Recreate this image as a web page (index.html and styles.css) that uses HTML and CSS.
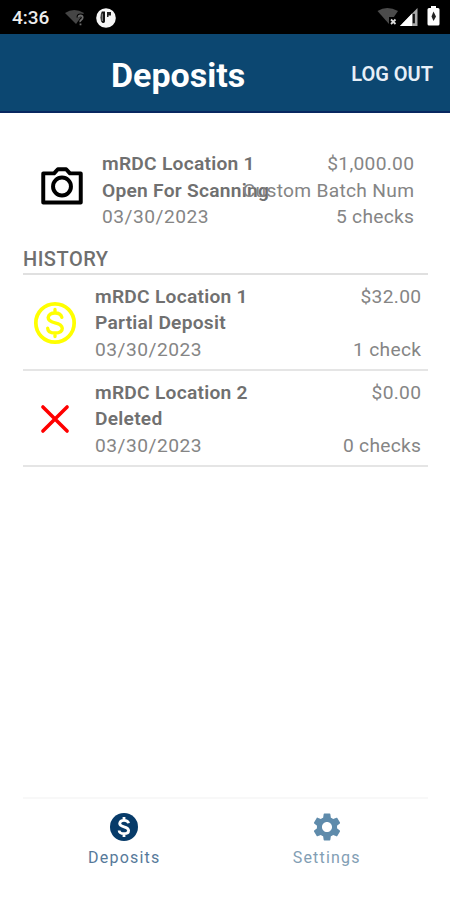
FILE: index.html
```
<!DOCTYPE html>
<html lang="en">
<head>
<meta charset="utf-8">
<title>Deposits</title>
<link rel="stylesheet" href="styles.css">
</head>
<body>
<div class="status">
  <span class="clock">4:36</span>
  <svg class="wifi-left" width="22" height="18" viewBox="0 0 22 18"><path d="M1 4Q10-2 20 4L12 15Z" fill="#454545"/><path d="M14 8.5Q14 6 16.5 6T19 8.5Q19 10 17.5 11T16.5 13" fill="none" stroke="#000" stroke-width="3"/><path d="M14.5 8.5Q14.5 6.5 16.5 6.5T18.7 8.5Q18.7 10 17.2 11T16.5 13M16.5 14.5V16.3" fill="none" stroke="#6c6c6c" stroke-width="1.8"/></svg>
  <svg class="app" width="20" height="20" viewBox="0 0 20 20"><circle cx="10" cy="10" r="9.8" fill="#f6f6f6"/><path d="M9 3.6H5.8Q4.5 6 4.5 9.5T6 14.5Q8.2 16 9 13.5Z" fill="#111"/><path d="M11 4h4v3.500h-2.500V9H11z" fill="#222"/><path d="M6.2 5.5V13" stroke="#aaa"/></svg>
  <svg class="wifi-right" width="22" height="20" viewBox="0 0 22 20"><path d="M.5 4Q10-2 21 4L12 17Z" fill="#4b4b4b"/><path d="M12 10h9v9h-9z" fill="#000"/><path d="M14 12.5l4.5 4.5m0-4.5L14 17" stroke="#ddd" stroke-width="1.8"/></svg>
  <svg class="signal" width="18" height="18" viewBox="0 0 18 18"><path d="M17.5 0V18H0Z" fill="#aaa"/><path d="M12 5.5V18H0Z" fill="#fff"/><path d="M12.7 5.8h2.2v9.5h-2.2z" fill="#111"/></svg>
  <svg class="battery" width="13" height="20" viewBox="0 0 13 20"><path d="M4 0h5v2h2q1.500 0 1.500 1.500V18q0 1.500-1.500 1.500H2Q.5 19.500.5 18V3.500Q.5 2 2 2h2z" fill="#fff"/><path d="M6.500 5.500L9 10.500 6.500 15 4.500 10.500Z" fill="#222"/></svg>
</div>
<header class="header">
  <h1 class="title">Deposits</h1>
  <span class="logout">LOG OUT</span>
</header>
<main class="content">
  <section class="row current">
    <svg class="icon" viewBox="0 0 24 24"><path d="M3 6.900h5.200L10 4.900h4l1.800 2H21V20.900H3Z" fill="none" stroke="#000" stroke-width="1.900" stroke-linejoin="round"/><circle cx="12" cy="13.200" r="4.300" fill="none" stroke="#000" stroke-width="1.900"/></svg>
    <div class="info"><b>mRDC Location 1</b><b>Open For Scanning</b><span>03/30/2023</span></div>
    <div class="amounts"><span>$1,000.00</span><span>Custom Batch Num</span><span>5 checks</span></div>
  </section>
  <h2 class="history">HISTORY</h2>
  <section class="row">
    <svg class="icon" viewBox="0 0 24 24" fill="none" stroke="#ff0" stroke-width="1.600" stroke-linecap="round"><circle cx="12" cy="12" r="9.200" stroke-width="1.800"/><path d="M15.300 9.300Q14.800 7.200 12 7.200T8.700 9.400Q8.700 11.200 12 11.900T15.500 14.500Q15.500 16.800 12 16.800T8.500 14.500M12 5.500V7.200M12 16.800V18.500"/></svg>
    <div class="info"><b>mRDC Location 1</b><b>Partial Deposit</b><span>03/30/2023</span></div>
    <div class="amounts"><span>$32.00</span><span></span><span>1 check</span></div>
  </section>
  <section class="row">
    <svg class="icon" viewBox="0 0 24 24"><path d="M6.200 6.200L17.800 17.800M17.800 6.200L6.200 17.800" fill="none" stroke="#f00" stroke-width="1.700" stroke-linecap="round"/></svg>
    <div class="info"><b>mRDC Location 2</b><b>Deleted</b><span>03/30/2023</span></div>
    <div class="amounts"><span>$0.00</span><span></span><span>0 checks</span></div>
  </section>
</main>
<nav class="tabs">
  <div class="tab active">
    <svg class="tab-icon" viewBox="2 2 20 20"><circle cx="12" cy="12" r="10" fill="#073b69"/><path d="M15.300 9.300Q14.800 7.200 12 7.200T8.900 9.400Q8.900 11.200 12 11.900T15.300 14.500Q15.300 16.800 12 16.800T8.500 14.500M12 4.800V7.200M12 16.800V19.200" fill="none" stroke="#fff" stroke-width="2"/></svg>
    <span>Deposits</span>
  </div>
  <div class="tab">
    <svg class="tab-icon" viewBox="2 2 20 20"><path fill="#5f8bab" d="M19.140 12.940c.04-.3.06-.61.06-.94 0-.32-.02-.64-.07-.94l2.030-1.580c.18-.14.23-.41.12-.61l-1.920-3.320c-.12-.22-.37-.29-.59-.22l-2.390.96c-.5-.38-1.030-.7-1.620-.94l-.36-2.540c-.04-.24-.24-.41-.48-.41h-3.840c-.24 0-.43.17-.47.41l-.36 2.540c-.59.24-1.130.57-1.620.94l-2.390-.96c-.22-.08-.47 0-.59.22L2.740 8.870c-.12.21-.08.47.12.61l2.030 1.580c-.05.3-.09.63-.09.94s.02.64.07.94l-2.030 1.580c-.18.14-.23.41-.12.61l1.920 3.320c.12.22.37.29.59.22l2.390-.96c.5.38 1.030.7 1.620.94l.36 2.540c.05.24.24.41.48.41h3.840c.24 0 .44-.17.47-.41l.36-2.540c.59-.24 1.130-.56 1.620-.94l2.390.96c.22.08.47 0 .59-.22l1.920-3.320c.12-.22.07-.47-.12-.61zM12 15.600c-1.980 0-3.600-1.620-3.600-3.600s1.620-3.600 3.600-3.600 3.600 1.620 3.600 3.600-1.620 3.600-3.600 3.600z"/></svg>
    <span>Settings</span>
  </div>
</nav>
</body>
</html>
```
FILE: styles.css
```
* { box-sizing: border-box; }
body { margin: 0; height: 900px; display: flex; flex-direction: column; background: #fff; font-family: Roboto, sans-serif; color: #858585; overflow: hidden; }
svg { display: block; flex: none; }
.status { height: 34px; background: #000; display: flex; align-items: flex-start; padding-left: 12px; }
.clock { width: 52px; color: #ededed; font-size: 19px; line-height: 36px; font-weight: 500; }
.wifi-left { margin-top: 9px; }
.app { margin: 8px 0 0 10px; }
.wifi-right { margin: 7px 0 0 261px; }
.signal { margin: 8px 0 0 1px; }
.battery { margin: 6px 0 0 9px; }
.header { height: 79px; background: #0c4771; border-bottom: 2px solid #082760; display: grid; grid-template-columns: 111px 1fr auto; align-items: center; padding-right: 17px; color: #fff; }
.title { grid-column: 2; margin: 4px 0 0; font-size: 34px; line-height: 40px; font-weight: 700; }
.logout { font-size: 20px; font-weight: 600; color: #e6eff8; margin-top: 3px; }
.content { flex: 1; padding: 38px 22px 0 23px; font-size: 19.200px; line-height: 26.7px; }
.row { height: 96px; display: flex; border-bottom: 2px solid #e5e5e5; padding: 8.500px 7px 0; }
.current { height: 95px; border: 0; padding: 0 14px; }
.icon { width: 50px; height: 50px; margin-top: 14px; }
.row > .icon { margin-top: 14px; }
.current > .icon { margin-top: 8px; }
.info { display: flex; flex-direction: column; width: 200px; margin-left: 15px; white-space: nowrap; letter-spacing: .5px; }
.info b { font-weight: 600; color: #707070; letter-spacing: .25px; }
.amounts { flex: 1; width: 0; display: flex; flex-direction: column; align-items: flex-end; white-space: nowrap; letter-spacing: .3px; }
.amounts span { height: 26.700px; margin-right: -.3px; }
.history { margin: 0; height: 29px; border-bottom: 2px solid #e0e0e0; font-size: 20px; line-height: 27px; font-weight: 500; color: #6f6f6f; letter-spacing: .5px; }
.tabs { height: 103px; margin: 0 22px 0 23px; border-top: 2px solid #f8f8f8; display: flex; }
.tab { flex: 1; display: flex; flex-direction: column; align-items: center; padding-top: 14px; color: #829eb4; font-size: 16px; line-height: 20px; letter-spacing: 1.200px; }
.active { color: #56799a; }
.tab-icon { width: 28px; height: 28px; margin-bottom: 7px; }
```
